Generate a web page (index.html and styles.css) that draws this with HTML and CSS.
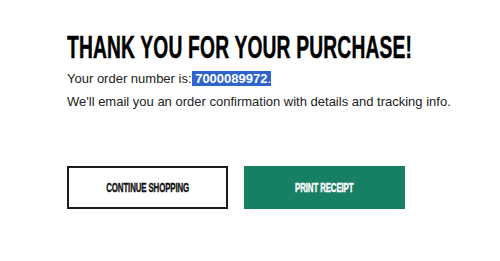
FILE: index.html
```html
<!DOCTYPE html>
<html>
<head>
<meta charset="utf-8">
<link rel="stylesheet" href="styles.css">
</head>
<body>
<main class="confirm">
  <h1 class="title"><span class="title-text">THANK YOU FOR YOUR PURCHASE!</span></h1>
  <p class="order">Your order number is:<span class="sel"> <b class="num">7000089972</b>.</span></p>
  <p class="note">We'll email you an order confirmation with details and tracking info.</p>
  <div class="actions">
    <a class="btn btn-outline" href="#"><span class="btn-label">CONTINUE SHOPPING</span></a>
    <a class="btn btn-green" href="#"><span class="btn-label">PRINT RECEIPT</span></a>
  </div>
</main>
</body>
</html>
```

FILE: styles.css
```css
html, body {
  margin: 0;
  padding: 0;
  background: #fff;
}
.confirm {
  padding: 30px 0 0 67px;
  font-family: "Liberation Sans", Arial, sans-serif;
  color: #222;
}
.title {
  margin: 0;
  height: 34px;
  overflow: hidden;
  font-family: "Liberation Sans", Arial, sans-serif;
  font-weight: 700;
  font-size: 30.5px;
  line-height: 34px;
  color: #000;
  white-space: nowrap;
}
.title-text {
  display: inline-block;
  transform: scaleX(0.63);
  transform-origin: left center;
  letter-spacing: 0.3px;
  -webkit-text-stroke: 0.5px #000;
}
.order {
  margin: 7px 0 0;
  font-size: 13px;
  line-height: 16px;
}
.sel {
  background: #2f64cc;
  color: #fff;
}
.num {
  font-weight: 700;
}
.note {
  margin: 7px 0 0;
  font-size: 13px;
  line-height: 16px;
}
.actions {
  display: flex;
  gap: 16px;
  margin-top: 56px;
}
.btn {
  box-sizing: border-box;
  width: 161px;
  height: 43px;
  display: flex;
  align-items: center;
  justify-content: center;
  text-decoration: none;
  font-weight: 700;
  font-size: 12.5px;
  white-space: nowrap;
  overflow: hidden;
}
.btn-label {
  display: inline-block;
  transform: scaleX(0.63);
  letter-spacing: -0.2px;
}
.btn-outline {
  border: 2px solid #1c1c1c;
  color: #111;
}
.btn-outline .btn-label {
  -webkit-text-stroke: 0.4px #111;
}
.btn-green {
  background: #177f63;
  color: #fff;
}
.btn-green .btn-label {
  -webkit-text-stroke: 0.4px #fff;
}
```
